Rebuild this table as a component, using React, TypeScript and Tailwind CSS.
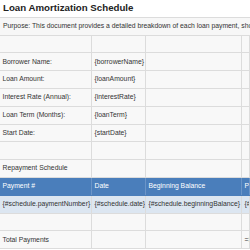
import React from 'react';

const cols = ['w-[92px]', 'w-[54px]', 'w-[96px]', 'flex-1'];

type Row = { cells: string[]; kind?: 'head' | 'data' | 'plain' };

const rows: Row[] = [
  { cells: ['', '', '', ''] },
  { cells: ['Borrower Name:', '{borrowerName}', '', ''] },
  { cells: ['Loan Amount:', '{loanAmount}', '', ''] },
  { cells: ['Interest Rate (Annual):', '{interestRate}', '', ''] },
  { cells: ['Loan Term (Months):', '{loanTerm}', '', ''] },
  { cells: ['Start Date:', '{startDate}', '', ''] },
  { cells: ['', '', '', ''] },
  { cells: ['Repayment Schedule', '', '', ''] },
  { cells: ['Payment #', 'Date', 'Beginning Balance', 'Payment Amount'], kind: 'head' },
  {
    cells: ['{#schedule.paymentNumber}', '{#schedule.date}', '{#schedule.beginningBalance}', '{#schedule.paymentAmount}'],
    kind: 'data',
  },
  { cells: ['', '', '', ''] },
  { cells: ['Total Payments', '', '', '=SUM(schedule.paymentAmount)'] },
];

export default function App() {
  return (
    <div
      className="w-[250px] h-[250px] overflow-hidden bg-white text-[#333] text-[6.8px]"
      style={{ fontFamily: '"Liberation Sans", Arial, sans-serif' }}
    >
      {/* Title */}
      <div className="h-[17.8px] flex items-center px-[3px] border-b border-[#dcdcdc] bg-white">
        <span className="text-[9.7px] font-bold text-[#222] whitespace-nowrap">Loan Amortization Schedule</span>
      </div>
      {/* Purpose */}
      <div className="h-[17.8px] flex items-center px-[3px] border-b border-[#dcdcdc] bg-[#f7f7f7]">
        <span className="whitespace-nowrap">
          Purpose: This document provides a detailed breakdown of each loan payment, showing principal and interest.
        </span>
      </div>

      {rows.map((row, i) => (
        <div
          key={i}
          className={`h-[17.8px] flex border-b ${
            row.kind === 'head'
              ? 'bg-[#4a7ebb] text-white border-[#4a7ebb]'
              : row.kind === 'data'
              ? 'bg-[#dce6f1] border-[#dcdcdc]'
              : 'bg-[#f8f8f8] border-[#dcdcdc]'
          }`}
        >
          {row.cells.map((c, j) => (
            <div
              key={j}
              className={`${cols[j]} h-full flex items-center px-[2.5px] overflow-hidden whitespace-nowrap border-r ${
                row.kind === 'head' ? 'border-[#6b95c8]' : 'border-[#dcdcdc]'
              }`}
            >
              {c}
            </div>
          ))}
        </div>
      ))}
    </div>
  );
}
